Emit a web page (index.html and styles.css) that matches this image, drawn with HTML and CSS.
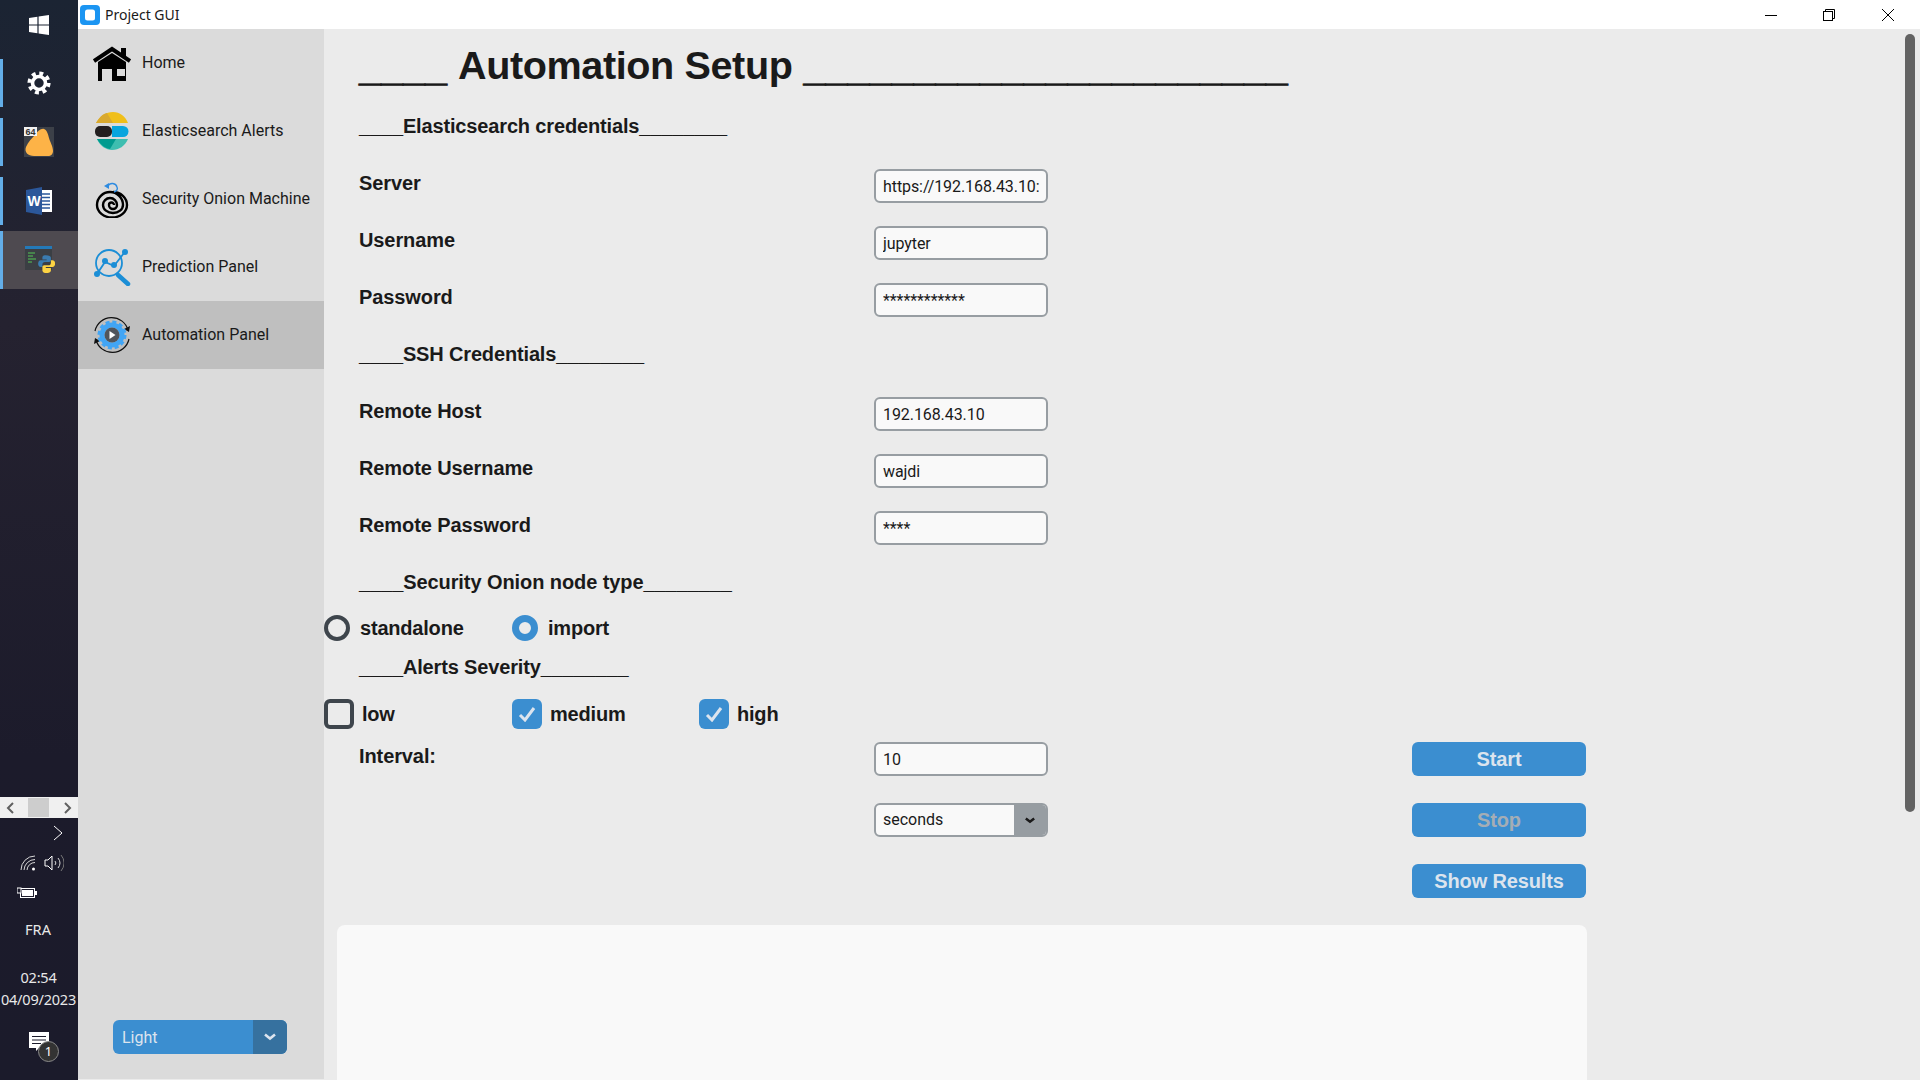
FILE: index.html
```html
<!DOCTYPE html>
<html lang="en">
<head>
    <meta charset="UTF-8">
    <meta name="viewport" content="width=device-width, initial-scale=1.0">
    <title>Project GUI</title>
    <link rel="stylesheet" href="styles.css">
</head>
<body>
    <!-- windows taskbar, docked left -->
    <aside class="taskbar">
        <div class="start-btn">
            <svg width="20" height="20" viewBox="0 0 20 20"><path fill="#fff" d="M0 3l8.400-1.300v7.800H0zM9.600 1.500L20 0v9.500H9.600zM0 10.600h8.400v7.700L0 17zM9.600 10.600H20V20L9.600 18.500z"/></svg>
        </div>
        <div class="task-item item-settings">
            <svg width="24" height="24" viewBox="0 0 24 24"><circle cx="12" cy="12" r="6.500" fill="none" stroke="#fff" stroke-width="3.600"/><circle cx="12" cy="12" r="9.600" fill="none" stroke="#fff" stroke-width="4" stroke-dasharray="3.900 3.640"/></svg>
        </div>
        <div class="task-item">
            <svg width="32" height="32" viewBox="0 0 32 32"><rect width="30" height="30" y="1" x="1" fill="#3c4048"/><path fill="#fdb347" d="M3 21c2-5 6-9 9-12 2-3 6-7 9-6 3 1 4 5 5 9 1 4 4 8 4 13 0 3-2 5-5 5H11c-6 0-10-4-8-9z"/><rect x="1" y="1" width="13" height="9" fill="#f1f1f1"/><text x="2.500" y="8.500" class="idle-text">64</text></svg>
        </div>
        <div class="task-item">
            <svg width="30" height="30" viewBox="0 0 30 30"><path fill="#fff" d="M14 4h14v22H14z"/><path stroke="#2b579a" stroke-width="1.600" d="M17 8h9M17 11.500h9M17 15h9M17 18.500h9M17 22h9"/><path fill="#2b579a" d="M2 4l16-3v28L2 26z"/><text x="3.500" y="19.500" class="word-text">W</text></svg>
        </div>
        <div class="task-item item-active">
            <svg width="32" height="32" viewBox="0 0 32 32"><rect x="2" y="2" width="27" height="24" fill="#3b3f44"/><rect x="2" y="2" width="27" height="3" fill="#2479b8"/><path stroke="#4c9a4f" stroke-width="1.300" d="M5 9h7M5 12h5M5 15h8M5 18h4"/><g transform="translate(7.500 3.500) scale(.85)"><path fill="#3a7cb0" d="M18 9c-4 0-4 2-4 3v2h5v1h-7c-2 0-3 2-3 4s1 4 3 4h2v-3c0-2 1-3 3-3h5c1 0 2-1 2-2v-3c0-2-2-3-6-3z"/><path fill="#fdd343" d="M19 30c4 0 5-2 5-3v-3h-6v-1h8c2 0 3-2 3-4s-1-4-3-4h-2v3c0 2-1 3-3 3h-5c-1 0-2 1-2 2v4c0 2 2 3 5 3z"/></g></svg>
        </div>

        <div class="task-scroll">
            <svg width="10" height="12" viewBox="0 0 10 12"><path d="M8 1L3 6l5 5" fill="none" stroke="#606060" stroke-width="2"/></svg>
            <span class="task-thumb"></span>
            <svg width="10" height="12" viewBox="0 0 10 12"><path d="M2 1l5 5-5 5" fill="none" stroke="#606060" stroke-width="2"/></svg>
        </div>

        <div class="tray">
            <div class="tray-row tray-expand">
                <svg width="10" height="16" viewBox="0 0 10 16"><path d="M1 1l8 7-8 7" fill="none" stroke="#fff" stroke-width="1"/></svg>
            </div>
            <div class="tray-row tray-icons">
                <svg width="16" height="16" viewBox="0 0 16 16" fill="none" stroke="#d8d8d8"><path d="M1 15A14 14 0 0 1 15 1M4 15A11 11 0 0 1 15 4.500M7 15a8 8 0 0 1 8-7.500" stroke-width="1"/><circle cx="13.500" cy="14" r="1.500" fill="#fff" stroke="none"/></svg>
                <svg width="20" height="18" viewBox="0 0 20 18" fill="none" stroke="#d8d8d8"><path d="M1 6h3l4-4v14l-4-4H1z" stroke="#fff"/><path d="M11 7a3 3 0 0 1 0 4M14 4a8 8 0 0 1 0 10" /><path d="M17 1a12 12 0 0 1 0 16" stroke="#777"/></svg>
            </div>
            <div class="tray-row tray-battery">
                <svg width="20" height="12" viewBox="0 0 20 12" fill="none"><rect x="3.500" y="1.500" width="14" height="9" stroke="#fff"/><rect x="5" y="3" width="11" height="6" fill="#fff"/><rect x="18" y="4" width="2" height="4" fill="#fff"/><rect x="0" y="1" width="4" height="5" fill="#1b1b2b" stroke="#fff"/></svg>
            </div>
            <div class="tray-lang">FRA</div>
            <div class="tray-clock">
                <div>02:54</div>
                <div>04/09/2023</div>
            </div>
            <div class="tray-notify">
                <svg width="20" height="19" viewBox="0 0 20 19"><path fill="#fff" d="M0 0h20v16H10l-3 3v-3H0z"/><path stroke="#1b1b2b" d="M3 4.500h14M3 8h14M3 11.500h9"/></svg>
                <span class="notify-badge">1</span>
            </div>
        </div>
    </aside>

    <div class="window">
        <header class="titlebar">
            <svg class="app-icon" width="20" height="20" viewBox="0 0 20 20"><rect width="20" height="20" rx="4" fill="#1b95f2"/><rect x="5" y="4.500" width="10" height="11" rx="2.500" fill="#fff"/></svg>
            <span class="app-title">Project GUI</span>
            <div class="window-btns">
                <span class="window-btn"><svg width="12" height="12" viewBox="0 0 12 12"><path d="M0 6.500h12" stroke="#000"/></svg></span>
                <span class="window-btn"><svg width="12" height="12" viewBox="0 0 12 12" fill="none" stroke="#000"><rect x="0.500" y="2.500" width="9" height="9"/><path d="M2.500 2.500v-2h9v9h-2"/></svg></span>
                <span class="window-btn"><svg width="12" height="12" viewBox="0 0 12 12"><path d="M0 0l12 12M12 0L0 12" stroke="#000"/></svg></span>
            </div>
        </header>

        <div class="content">
            <nav class="sidebar">
                <a class="nav-item">
                    <svg class="nav-icon" width="38" height="38" viewBox="0 0 38 38"><path d="M1 17L19 5l18 12" fill="none" stroke="#000" stroke-width="4"/><path d="M28 4h5v9h-5z"/><path d="M5 18L19 9l14 9v19H5z"/><path fill="#dbdbdb" d="M9 25h10v12H9z"/><path fill="#dbdbdb" d="M24 25h8v7h-8z"/></svg>
                    <span>Home</span>
                </a>
                <a class="nav-item">
                    <svg class="nav-icon" width="38" height="38" viewBox="0 0 38 38"><path fill="#f0bf1a" d="M3 11C7 4 13 0 20 0c7 0 12 4 15 11z"/><path fill="#d9a92e" d="M3 11C6 6 9 2 14 1l6 10z"/><rect x="2" y="14" width="17" height="11" rx="5" fill="#231f20"/><path fill="#07a5de" d="M19 14h11a5.500 5.500 0 0 1 0 11H19z"/><path fill="#3ebeb0" d="M4 27h31c-3 7-9 11-16 11-6 0-12-4-15-11z"/><path fill="#019b8f" d="M4 27h19l-6 10c-6-1-10-5-13-10z"/></svg>
                    <span>Elasticsearch Alerts</span>
                </a>
                <a class="nav-item">
                    <svg class="nav-icon" width="38" height="38" viewBox="0 0 38 38"><path d="M21 25A2.500 2.500 0 0 0 16 25A4 4 0 0 0 24 25A7 7 0 0 0 10 25A10 8 0 0 0 30 25A13 13 0 0 0 4 25A15 12.500 0 0 0 34 25A14 13 0 0 0 20 12" fill="none" stroke="#000" stroke-width="2.400"/><path d="M15 6c2-4 8-3 9 1 1 2 0 4-3 5" fill="none" stroke="#2e8be0" stroke-width="1.400"/><path d="M11 6l5-3 0 6z" fill="#2e8be0"/></svg>
                    <span>Security Onion Machine</span>
                </a>
                <a class="nav-item">
                    <svg class="nav-icon" width="38" height="38" viewBox="0 0 38 38" fill="none" stroke="#1b8ed6" stroke-width="1.800"><circle cx="16" cy="15" r="13"/><path d="M25 27l10 9" stroke-width="4.500" stroke-linecap="round"/><path d="M4 26l8-12 9 4 10-13"/><g fill="#1b8ed6" stroke="none"><circle cx="4" cy="26" r="3"/><circle cx="12" cy="13" r="3"/><circle cx="21" cy="17" r="3"/><circle cx="32" cy="4" r="3"/></g></svg>
                    <span>Prediction Panel</span>
                </a>
                <a class="nav-item nav-active">
                    <svg class="nav-icon" width="38" height="38" viewBox="0 0 38 38" fill="none"><path d="M2 15A17 17 0 0 1 35 14M36 23A17 17 0 0 1 3 24" stroke="#111" stroke-width="1.200"/><path d="M37 10l-1 6-5-3zM1 28l1-6 5 3z" fill="#111"/><circle cx="19" cy="19" r="10" stroke="#41a5f5" stroke-width="5"/><circle cx="19" cy="19" r="13" stroke="#41a5f5" stroke-width="3" stroke-dasharray="4 2.800"/><circle cx="19" cy="19" r="7.500" fill="#50555c"/><path d="M16.500 15l6 4-6 4z" fill="#fff"/></svg>
                    <span>Automation Panel</span>
                </a>
                <div class="theme-select">
                    <span class="theme-value">Light</span>
                    <span class="theme-arrow"><svg width="12" height="8" viewBox="0 0 12 8"><path d="M1 1.500l5 4 5-4" fill="none" stroke="#dce4ee" stroke-width="2.600"/></svg></span>
                </div>
            </nav>

            <main class="main">
                <div class="form">
                    <h1 class="page-title"><span class="rule">____</span> <span class="title-text">Automation Setup</span> <span class="rule">______________________</span></h1>

                    <h2 class="section-title">____Elasticsearch credentials________</h2>
                    <div class="field">
                        <label class="field-label">Server</label>
                        <input class="entry" type="text" value="https://192.168.43.10:9200">
                    </div>
                    <div class="field">
                        <label class="field-label">Username</label>
                        <input class="entry" type="text" value="jupyter">
                    </div>
                    <div class="field">
                        <label class="field-label">Password</label>
                        <input class="entry" type="text" value="************">
                    </div>

                    <h2 class="section-title title-ssh">____SSH Credentials________</h2>
                    <div class="field">
                        <label class="field-label">Remote Host</label>
                        <input class="entry" type="text" value="192.168.43.10">
                    </div>
                    <div class="field">
                        <label class="field-label">Remote Username</label>
                        <input class="entry" type="text" value="wajdi">
                    </div>
                    <div class="field">
                        <label class="field-label">Remote Password</label>
                        <input class="entry" type="text" value="****">
                    </div>

                    <h2 class="section-title title-tight title-node">____Security Onion node type________</h2>
                    <div class="options radios">
                        <div class="option opt-first"><span class="radio"></span>standalone</div>
                        <div class="option"><span class="radio radio-on"></span>import</div>
                    </div>

                    <h2 class="section-title title-tight">____Alerts Severity________</h2>
                    <div class="options checks">
                        <div class="option opt-first"><span class="check"></span>low</div>
                        <div class="option opt-second"><span class="check check-on"><svg width="18" height="16" viewBox="0 0 18 16"><path d="M2 9l5 5 9-12" fill="none" stroke="#dce4ee" stroke-width="3"/></svg></span>medium</div>
                        <div class="option"><span class="check check-on"><svg width="18" height="16" viewBox="0 0 18 16"><path d="M2 9l5 5 9-12" fill="none" stroke="#dce4ee" stroke-width="3"/></svg></span>high</div>
                    </div>

                    <div class="field field-wide">
                        <label class="field-label">Interval:</label>
                        <input class="entry" type="text" value="10">
                        <button class="btn">Start</button>
                    </div>
                    <div class="field field-wide">
                        <span class="field-label"></span>
                        <div class="unit-select">
                            <span class="unit-value">seconds</span>
                            <span class="unit-arrow"><svg width="10" height="7" viewBox="0 0 12 8"><path d="M1 1.500l5 4 5-4" fill="none" stroke="#1a1a1a" stroke-width="3"/></svg></span>
                        </div>
                        <button class="btn btn-disabled">Stop</button>
                    </div>
                    <div class="field field-wide">
                        <button class="btn">Show Results</button>
                    </div>

                    <div class="results"></div>
                </div>
                <div class="scroll-thumb"></div>
            </main>
        </div>
    </div>
</body>
</html>
```

FILE: styles.css
```css
* {
    box-sizing: border-box;
}
body {
    display: flex;
    height: 100vh;
    margin: 0;
    overflow: hidden;
    font-family: "Liberation Sans", Arial, sans-serif;
    background-color: #ebebeb;
    color: #1a1a1a;
}

/* taskbar */
.taskbar {
    display: flex;
    flex-direction: column;
    flex: 0 0 78px;
    height: 100%;
    background: linear-gradient(180deg, #1b2433 0%, #252230 30%, #1c1b2b 70%, #1b1b2b 100%);
    color: #e8e8e8;
    font-family: "Noto Sans", sans-serif;
}
.start-btn {
    display: flex;
    justify-content: center;
    align-items: center;
    height: 59px;
    padding: 0 0 10px;
}
.task-item {
    display: flex;
    justify-content: center;
    align-items: center;
    height: 48px;
    margin-bottom: 11px;
    padding-right: 4px;
    border-left: 3px solid #63aee8;
}
.item-active {
    height: 58px;
    margin-top: -5px;
    margin-bottom: 0;
    background-color: #4e4a50;
}
.task-scroll {
    display: flex;
    justify-content: space-between;
    align-items: center;
    height: 21px;
    margin-top: auto;
    padding: 0 5px;
    background-color: #f0f0f0;
}
.task-thumb {
    width: 21px;
    height: 19px;
    margin-right: 2px;
    background-color: #cdcdcd;
}
.tray {
    display: flex;
    flex-direction: column;
    height: 262px;
    font-size: 14.500px;
    text-align: center;
}
.tray-row {
    display: flex;
    align-items: center;
}
.tray-expand {
    justify-content: flex-end;
    height: 30px;
    padding: 0 15px 0 0;
}
.tray-icons {
    gap: 8px;
    height: 30px;
    padding: 0 0 0 20px;
}
.tray-battery {
    height: 30px;
    padding-left: 17px;
}
.tray-lang {
    margin-top: 10px;
    padding-right: 2px;
    line-height: 22px;
}
.tray-clock {
    margin-top: 26px;
    padding-right: 1px;
    line-height: 22px;
    letter-spacing: -0.200px;
    white-space: nowrap;
}
.tray-notify {
    position: relative;
    width: 20px;
    margin: 22px 0 0 29px;
}
.notify-badge {
    position: absolute;
    left: 9px;
    top: 9px;
    width: 21px;
    height: 21px;
    border: 1px solid #8a8a8a;
    border-radius: 50%;
    background-color: #333;
    color: #fff;
    font-size: 13px;
    line-height: 19px;
}

/* window */
.window {
    display: flex;
    flex-direction: column;
    flex: 1;
    min-width: 0;
}
.titlebar {
    display: flex;
    align-items: center;
    flex: 0 0 29px;
    padding-left: 2px;
    background-color: #fff;
}
.app-title {
    margin-left: 5px;
    font-family: "Noto Sans", sans-serif;
    font-size: 14px;
}
.window-btns {
    display: flex;
    margin-left: auto;
    padding-right: 3px;
}
.window-btn {
    display: flex;
    justify-content: center;
    align-items: center;
    width: 58.500px;
    height: 29px;
}
.content {
    display: flex;
    flex: 1;
    min-height: 0;
}

/* sidebar */
.sidebar {
    display: flex;
    flex-direction: column;
    flex: 0 0 246px;
    height: 1050px;
    background-color: #dbdbdb;
    font-family: Roboto, sans-serif;
    font-size: 16px;
}
.nav-item {
    display: flex;
    align-items: center;
    gap: 11px;
    height: 68px;
    padding-left: 15px;
}
.nav-item span {
    padding-bottom: 2px;
}
.nav-active {
    background-color: #bfbfbf;
}
.theme-select {
    display: flex;
    width: 174px;
    height: 34px;
    margin: auto 0 25px 35px;
    border-radius: 6px;
    overflow: hidden;
    color: #dce4ee;
    background-color: #3b8ed0;
}
.theme-value {
    flex: 1;
    padding: 1px 0 0 9px;
    line-height: 34px;
}
.theme-arrow {
    display: flex;
    justify-content: center;
    align-items: center;
    width: 34px;
    background-color: #36719f;
}

/* main form */
.main {
    display: flex;
    flex: 1;
    min-width: 0;
}
.form {
    display: flex;
    flex-direction: column;
    flex: 0 0 1263px;
}
.form > * {
    flex-shrink: 0;
}
.page-title {
    height: 82px;
    margin: 0;
    padding-left: 35px;
    font-size: 39.600px;
    line-height: 73px;
    white-space: nowrap;
}
.rule {
    -webkit-text-stroke: 0.800px #1a1a1a;
    position: relative;
    top: 2px;
}
.title-text {
    letter-spacing: -0.400px;
}
.section-title {
    height: 30px;
    margin: 0 0 28px;
    padding-left: 35px;
    font-size: 20px;
    line-height: 30px;
    letter-spacing: -0.150px;
    white-space: nowrap;
}
.title-ssh {
    margin-top: -1px;
}
.title-tight {
    margin-top: -1px;
    margin-bottom: 17px;
}
.title-node {
    letter-spacing: -0.080px;
}
.field {
    display: flex;
    flex: 0 0 34px;
    margin-bottom: 23px;
    padding: 0 1px 0 35px;
}
.field-wide {
    justify-content: flex-end;
    margin-bottom: 27px;
}
.field-label {
    flex: 0 0 515px;
    margin-top: -3px;
    font-size: 20px;
    font-weight: bold;
    line-height: 34px;
    letter-spacing: -0.100px;
}
.entry {
    width: 174px;
    height: 34px;
    padding: 0 7px;
    border: 2px solid #979da2;
    border-radius: 6px;
    outline: none;
    background-color: #f9f9f9;
    color: #1a1a1a;
    font-family: Roboto, sans-serif;
    font-size: 16px;
    letter-spacing: -0.080px;
}
.unit-select {
    display: flex;
    width: 174px;
    height: 34px;
    border: 2px solid #979da2;
    border-radius: 6px;
    overflow: hidden;
    background-color: #f9f9f9;
    font-family: Roboto, sans-serif;
    font-size: 16px;
}
.unit-value {
    flex: 1;
    padding-left: 7px;
    line-height: 30px;
}
.unit-arrow {
    display: flex;
    justify-content: center;
    align-items: center;
    width: 32px;
    background-color: #979da2;
}
.btn {
    width: 174px;
    height: 34px;
    margin-left: auto;
    padding: 0;
    border: none;
    border-radius: 6px;
    background-color: #3b8ed0;
    color: #dce4ee;
    font-family: "Liberation Sans", Arial, sans-serif;
    font-size: 20px;
    font-weight: bold;
    letter-spacing: -0.150px;
}
.btn-disabled {
    color: #a5adb5;
}

/* radios and checkboxes */
.options {
    display: flex;
    font-size: 20px;
    font-weight: bold;
    letter-spacing: -0.200px;
}
.radios {
    height: 26px;
    margin-top: 1px;
    margin-bottom: 12px;
}
.checks {
    height: 30px;
    margin-bottom: 13px;
}
.option {
    display: flex;
    align-items: center;
}
.opt-first {
    flex: 0 0 188px;
}
.opt-second {
    flex: 0 0 187px;
}
.radio {
    width: 26px;
    height: 26px;
    margin-right: 10px;
    border: 4px solid #3e454c;
    border-radius: 50%;
}
.radio-on {
    border: 7px solid #3b8ed0;
}
.check {
    display: flex;
    justify-content: center;
    align-items: center;
    width: 30px;
    height: 30px;
    margin-right: 8px;
    border: 4px solid #3e454c;
    border-radius: 6px;
}
.check-on {
    border: none;
    background-color: #3b8ed0;
}
.results {
    height: 200px;
    margin: 0 0 0 13px;
    border-radius: 8px;
    background-color: #f9f9f9;
}
.scroll-thumb {
    width: 10px;
    height: 778px;
    margin: 5px 5px 0 auto;
    border-radius: 5px;
    background-color: #636363;
}
.idle-text {
    font-family: "Liberation Sans", sans-serif;
    font-size: 9px;
    font-weight: bold;
    fill: #333;
}
.word-text {
    font-family: "Liberation Sans", sans-serif;
    font-size: 14px;
    font-weight: bold;
    fill: #fff;
}
```
